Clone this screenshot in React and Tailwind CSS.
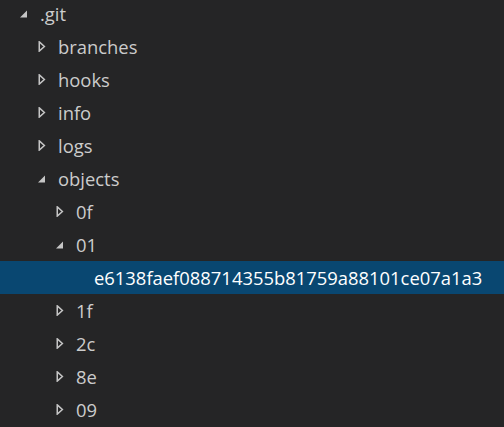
import React from "react";

const tree = [
  { name: ".git", level: 0, open: true },
  { name: "branches", level: 1 },
  { name: "hooks", level: 1 },
  { name: "info", level: 1 },
  { name: "logs", level: 1 },
  { name: "objects", level: 1, open: true },
  { name: "0f", level: 2 },
  { name: "01", level: 2, open: true },
  { name: "e6138faef088714355b81759a88101ce07a1a3", level: 3, file: true, selected: true },
  { name: "1f", level: 2 },
  { name: "2c", level: 2 },
  { name: "8e", level: 2 },
  { name: "09", level: 2 },
];

const indent = ["pl-[20px]", "pl-[38px]", "pl-[56px]", "pl-[74px]"];

const Twistie = ({ open }) =>
  open ? (
    <svg width="8" height="8" viewBox="0 0 8 8" className="shrink-0">
      <path d="M7 0.5 L7 7.5 L0 7.5 Z" fill="#c5c5c5" />
    </svg>
  ) : (
    <svg width="8" height="11" viewBox="0 0 8 11" className="shrink-0">
      <path d="M1.25 0.9 L6.4 5.5 L1.25 10.1 Z" fill="none" stroke="#c5c5c5" strokeWidth="1.5" />
    </svg>
  );

const Row = ({ node }) => (
  <div
    className={`flex items-center h-[33px] ${indent[node.level]} ${
      node.selected ? "bg-[#094771] text-white" : "text-[#cccccc]"
    }`}
  >
    <div className="w-[20px] flex items-center">
      {!node.file && <Twistie open={node.open} />}
    </div>
    <span className="whitespace-nowrap pt-[1px]">{node.name}</span>
  </div>
);

export default function App() {
  return (
    <div
      className="w-[504px] h-[427px] overflow-hidden bg-[#252526] text-[18.4px]"
      style={{ fontFamily: '"Open Sans", "Noto Sans", sans-serif' }}
    >
      <div className="-mt-[3px]">
        {tree.map((node, i) => (
          <Row key={i} node={node} />
        ))}
      </div>
    </div>
  );
}
